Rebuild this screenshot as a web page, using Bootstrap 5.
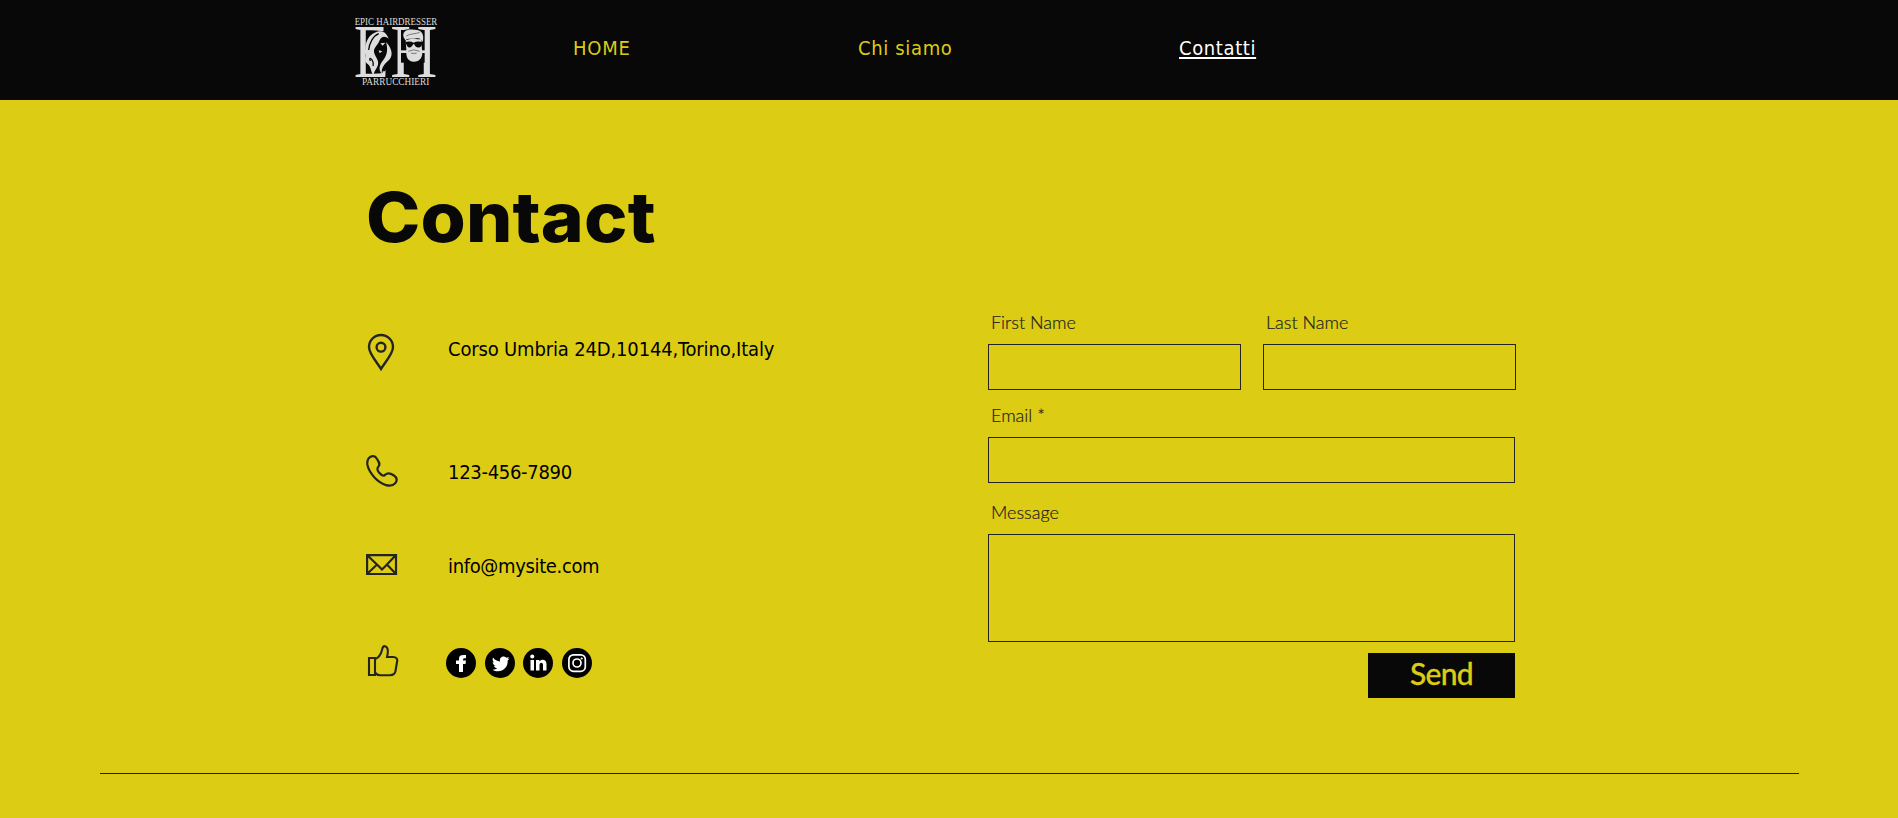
<!DOCTYPE html>
<html lang="it">
<head>
<meta charset="utf-8">
<meta name="viewport" content="width=device-width, initial-scale=1">
<title>Epic Hairdresser - Contatti</title>
<link href="https://cdn.jsdelivr.net/npm/bootstrap@5.3.0/dist/css/bootstrap.min.css" rel="stylesheet">
<style>
:root{--gold:#dccc14;--ink:#080808}
body{background:var(--gold);color:#000;font-family:"DejaVu Sans Condensed","DejaVu Sans",sans-serif;font-size:20px;line-height:24px;overflow:hidden}
.site-head{background:var(--ink);height:100px;padding-left:340px}
.brand-art{width:110px;height:100px;display:block}
.main-menu{padding-left:123px;padding-bottom:5px}
.main-menu a{color:var(--gold);text-decoration:none}
.main-menu .active{color:#fff;text-decoration:underline;text-decoration-thickness:2px;text-underline-offset:2px}
.menu-home{width:285px;letter-spacing:.8px}
.menu-about{width:321px;letter-spacing:.65px}
.menu-contact{letter-spacing:.62px}
.page-body{height:673px;padding-left:366px}
.info-col{width:622px}
.page-title{height:192px;padding-top:75px;font:800 69px/84px Inter,sans-serif;letter-spacing:.1px;color:var(--ink);transform:scaleX(1.06);transform-origin:left}
.info-row{padding-right:20px}
.info-icon{width:80px;flex:none}
.info-icon svg,.social-links svg{display:block}
.info-row span{padding-left:2px}
.r1{height:120px}.r2{height:117px}.r3{height:71px}.r4{height:121px}
.r1 span{letter-spacing:-.16px;margin-top:-6px}
.r2 span{letter-spacing:-.3px;margin-top:3px}
.r3 span{letter-spacing:-.35px;margin-top:3px}
.social-links{gap:8.7px;padding-top:4px}
.form-col{width:528px;padding-top:210px;font-family:Lato,sans-serif}
.form-col .form-label{font-size:18px;font-weight:300;line-height:24px;margin:0 0 10px;padding-left:3px;color:#222;-webkit-text-stroke:.2px #222}
.form-col .form-control{border:1px solid #242424;border-radius:0;background:transparent;height:46px;resize:none}
.form-col .form-control.msg{height:108px}
.field-half{width:253px}
.field-wide{width:527px}
.field-email{padding-top:13px}
.field-msg{padding-top:17px}
.field-send{padding-top:11px}
.btn-send{width:147px;height:45px;border-radius:0;background:var(--ink);color:var(--gold);font:500 30px/36px Lato,sans-serif;letter-spacing:-.7px;padding:0 0 5px;border:0;-webkit-text-stroke:.3px var(--gold)}
.end-rule{margin:0 99px 0 100px;border:0;border-top:1px solid #22200a;opacity:1}
</style>
</head>
<body>
<header class="site-head d-flex align-items-center">
  <svg class="brand-art" viewBox="0 0 330 300" role="img" aria-label="Epic Hairdresser Parrucchieri">
    <g fill="#ddd" font-family="'Liberation Serif',serif">
      <text x="44" y="74" font-size="31" textLength="248" lengthAdjust="spacingAndGlyphs">EPIC HAIRDRESSER</text>
      <text x="42" y="230" font-size="228" textLength="104" lengthAdjust="spacingAndGlyphs">E</text>
      <text x="151" y="230" font-size="228" textLength="141" lengthAdjust="spacingAndGlyphs">H</text>
      <text x="66" y="256" font-size="31" textLength="202" lengthAdjust="spacingAndGlyphs">PARRUCCHIERI</text>
    </g>
    <!-- woman with long hair -->
    <path d="M78 94H134V120L158 158V188L134 214H90V190L78 176Z" fill="#080808"/>
    <path d="M78 168C70 128 88 98 118 94C132 92 142 104 146 116C135 107 124 108 119 121C115 132 108 137 103 147C98 161 111 171 114 184C117 202 105 206 100 226C91 212 93 200 84 193C73 184 74 178 78 168Z" fill="#ddd"/>
    <path d="M86 150C88 130 99 108 116 101M91 183C84 166 103 180 99 198" fill="none" stroke="#080808" stroke-width="4"/>
    <path d="M138 126C159 148 160 171 143 184C132 194 123 205 126 221C110 205 124 188 132 177C142 164 144 147 138 126ZM121 130L136 128L128 137ZM116 151L127 154L119 160Z" fill="#ddd"/>
    <!-- bearded man with sunglasses -->
    <path d="M183 90H254V188H183Z" fill="#080808"/>
    <path d="M180 151H256V159H180Z" fill="#ddd"/>
    <path d="M191 112C185 93 203 86 222 89C242 88 253 99 249 122L245 127C246 117 239 113 229 115C216 119 204 113 196 121Z" fill="#ddd"/>
    <path d="M197 121C212 114 229 119 243 117L246 149C251 174 236 186 221 185C204 184 197 171 199 149Z" fill="#ddd"/>
    <path d="M196 126C206 123 214 124 221 128C229 124 239 124 248 127L244 138C237 146 227 144 223 133H219C216 144 205 145 201 137Z" fill="#080808"/>
    <path d="M205 154Q221 145 239 154M213 160H230M199 108C211 100 226 103 239 97" fill="none" stroke="#777" stroke-width="3"/>
  </svg>
  <nav class="main-menu d-flex">
    <a class="menu-home" href="#">HOME</a>
    <a class="menu-about" href="#">Chi siamo</a>
    <a class="menu-contact active" href="#">Contatti</a>
  </nav>
</header>

<main class="page-body d-flex">
  <section class="info-col">
    <h1 class="page-title m-0">Contact</h1>
    <div class="info-row r1 d-flex align-items-center">
      <div class="info-icon"><svg width="32" height="38" viewBox="0 0 32 38" fill="none" stroke="#242424" stroke-width="2.4"><path d="M15 36C11 29 3 21 3 14A12 12 0 0 1 27 14C27 21 19 29 15 36Z"/><circle cx="15" cy="14.2" r="4.4"/></svg></div>
      <span>Corso Umbria 24D,10144,Torino,Italy</span>
    </div>
    <div class="info-row r2 d-flex align-items-center">
      <div class="info-icon"><svg width="32" height="32" viewBox="0 0 32 32" fill="none" stroke="#242424" stroke-width="2.2"><path d="M4 2C7 .5 9 .5 11 4C13 7 14.5 9 12.5 11.5C10.5 13.5 11 15 13 17.5C16 21 18 21.500 19.500 19.500C21.500 17.500 25 18.500 28 20.500C31 22.500 31.500 25 29.500 28C25 33 16 30.500 8.500 22.500C1 14 -1 6 4 2Z"/></svg></div>
      <span>123-456-7890</span>
    </div>
    <div class="info-row r3 d-flex align-items-center">
      <div class="info-icon"><svg width="32" height="22" viewBox="0 0 32 22" fill="none" stroke="#242424" stroke-width="2.200"><path d="M1.100 1.100H30V20H1.100ZM1 1L12 11.500L16 15.500L20 11.500L30 1M1 20L10.500 11H12M30 20L21.500 11H20"/></svg></div>
      <span>info@mysite.com</span>
    </div>
    <div class="info-row r4 d-flex align-items-center">
      <div class="info-icon"><svg width="34" height="32" viewBox="0 0 34 32" fill="none" stroke="#242424" stroke-width="2.100"><path d="M3 13H9V30H3ZM9 14C12 13 15 9 16 5C16.500 1.500 17.500 1 19 1.200C22 2 22.500 6 21 12H27C30.500 12 31.800 14 31 17L29.500 26C29 29 27 30.200 24 30.200H14C12 30.200 10.500 29.500 9 27.500"/></svg></div>
      <div class="social-links d-flex">
        <svg width="30" height="30" viewBox="0 0 30 30"><circle cx="15" cy="15" r="15"/><path d="M13 24V16H10V12.500H13V10.500C13 7.500 15 6.500 20 7V10.200C17.500 10 17 10.300 17 12.500H20L19.500 16H17V24Z" fill="#fff"/></svg>
        <svg width="30" height="30" viewBox="0 0 30 30"><circle cx="15" cy="15" r="15"/><path d="M8 9.500C10 12 12 13.200 15 13.400C14.500 10 16.500 8.500 19 8.600C20 8.700 21 9.200 21.600 9.800L24 9L22.600 11L24.500 10.600L22.700 12.500C23 19 18.500 23.300 13 23.300C11 23.300 9.300 22.800 7.500 21.700C9.500 21.800 11 21.300 12.300 20.300C10.500 20.100 9.500 19.200 9 17.900L10.500 17.800C8.700 17.200 7.700 16 7.700 14.100L9.200 14.500C7.700 13.300 7.200 11.500 8 9.500Z" fill="#fff"/></svg>
        <svg width="30" height="30" viewBox="0 0 30 30"><circle cx="15" cy="15" r="15"/><path d="M7.500 12H11V22.500H7.500ZM13 12H16.400V13.500C18.500 10.800 23.500 11.200 23.500 16V22.500H20V17C20 13.800 16.500 14.200 16.500 17V22.500H13Z" fill="#fff"/><circle cx="9.250" cy="8.500" r="2" fill="#fff"/></svg>
        <svg width="30" height="30" viewBox="0 0 30 30"><circle cx="15" cy="15" r="15"/><rect x="6.900" y="6.900" width="16.400" height="16.400" rx="4.500" fill="none" stroke="#fff" stroke-width="1.700"/><circle cx="15" cy="15" r="4" fill="none" stroke="#fff" stroke-width="1.700"/><circle cx="19.700" cy="10.500" r="1.100" fill="#fff"/></svg>
      </div>
    </div>
  </section>

  <form class="form-col">
    <div class="d-flex justify-content-between">
      <div class="field-half"><label class="form-label d-block" for="fn">First Name</label><input class="form-control" id="fn"></div>
      <div class="field-half"><label class="form-label d-block" for="ln">Last Name</label><input class="form-control" id="ln"></div>
    </div>
    <div class="field-wide field-email">
      <label class="form-label d-block" for="em">Email *</label><input class="form-control" id="em">
    </div>
    <div class="field-wide field-msg">
      <label class="form-label d-block" for="ms">Message</label><textarea class="form-control msg" id="ms"></textarea>
    </div>
    <div class="field-wide field-send d-flex justify-content-end"><button class="btn btn-send" type="button">Send</button></div>
  </form>
</main>
<hr class="end-rule">
<script src="https://cdn.jsdelivr.net/npm/bootstrap@5.3.0/dist/js/bootstrap.bundle.min.js"></script>
</body>
</html>
